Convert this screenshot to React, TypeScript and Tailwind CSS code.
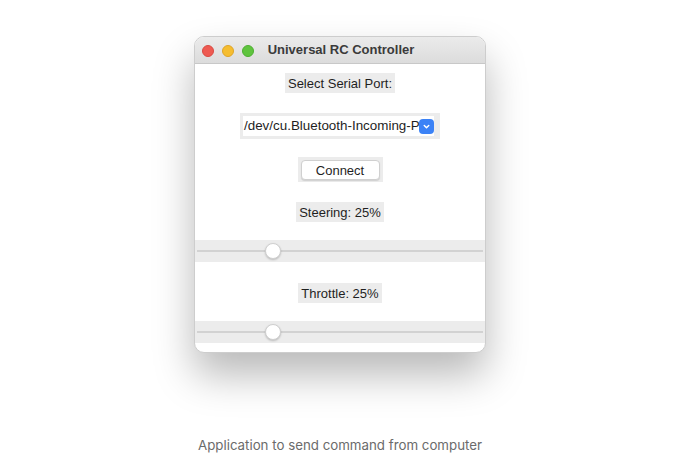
import React from "react";

function TrafficLights() {
  return (
    <div className="absolute left-[7px] top-[8px] flex gap-[8px]">
      <span className="w-[12px] h-[12px] rounded-full bg-[#ee5a52] border border-[#d94a42]" />
      <span className="w-[12px] h-[12px] rounded-full bg-[#f5bd30] border border-[#dea428]" />
      <span className="w-[12px] h-[12px] rounded-full bg-[#5fc43e] border border-[#4eae32]" />
    </div>
  );
}

function Slider({ thumb }: { thumb: number }) {
  return (
    <div className="relative h-[22px] w-full bg-[#ececec] flex items-center">
      <div className="h-[2px] w-full mx-[2px] bg-[#d2d2d2]" />
      <span
        className="absolute top-[3px] w-[16px] h-[16px] rounded-full bg-white border border-[#cfcfcf] shadow-[0_1px_2px_rgba(0,0,0,0.2)]"
        style={{ left: thumb }}
      />
    </div>
  );
}

function Label({ children }: { children: React.ReactNode }) {
  return (
    <div className="bg-[#ececec] px-[3px] h-[20px] flex items-center text-[13px] text-[#1f1f1f] leading-none">
      {children}
    </div>
  );
}

export default function App() {
  return (
    <div className="w-[680px] h-[456px] bg-white flex flex-col items-center font-['Liberation_Sans',Arial,sans-serif]">
      <div className="mt-[36px] w-[292px] h-[318px] rounded-[10px] border border-[#cdcdcd] bg-white overflow-hidden shadow-[0_22px_40px_rgba(0,0,0,0.28)] flex flex-col items-center">
        <div className="relative w-full h-[27px] shrink-0 bg-gradient-to-b from-[#ebebeb] to-[#dcdcdc] border-b border-[#c8c8c8] flex items-center justify-center">
          <TrafficLights />
          <span className="text-[13px] font-bold text-[#3a3a3a] pl-[2px]">
            Universal RC Controller
          </span>
        </div>

        <div className="mt-[9px]">
          <Label>Select Serial Port:</Label>
        </div>

        <div className="mt-[20px] w-[200px] h-[26px] bg-[#ececec] flex items-center pl-[3px] pr-[6px]">
          <div className="relative flex-1 h-[20px] bg-white flex items-center">
            <span className="text-[13.4px] text-[#1f1f1f] whitespace-nowrap pl-[1px]">
              /dev/cu.Bluetooth-Incoming-P
            </span>
            <span className="absolute right-0 top-[3px] w-[15px] h-[15px] rounded-[4px] bg-[#3b82f6] flex items-center justify-center">
              <svg width="9" height="9" viewBox="0 0 10 10">
                <path d="M2.5 4 L5 6.5 L7.5 4" stroke="white" strokeWidth="1.6" fill="none" strokeLinecap="round" strokeLinejoin="round" />
              </svg>
            </span>
          </div>
        </div>

        <div className="mt-[18px] w-[85px] h-[25px] bg-[#ececec] flex items-center justify-center">
          <button className="w-[79px] h-[20px] bg-white rounded-[4px] border border-[#d0d0d0] shadow-[0_1px_1px_rgba(0,0,0,0.12)] text-[13px] text-[#1f1f1f]">
            Connect
          </button>
        </div>

        <div className="mt-[20px]">
          <Label>Steering: 25%</Label>
        </div>

        <div className="mt-[18px] w-full">
          <Slider thumb={70} />
        </div>

        <div className="mt-[21px]">
          <Label>Throttle: 25%</Label>
        </div>

        <div className="mt-[18px] w-full">
          <Slider thumb={70} />
        </div>
      </div>

      <p className="mt-[83px] text-[13.3px] text-[#6b6b6b] font-['Inter',sans-serif]">
        Application to send command from computer
      </p>
    </div>
  );
}
